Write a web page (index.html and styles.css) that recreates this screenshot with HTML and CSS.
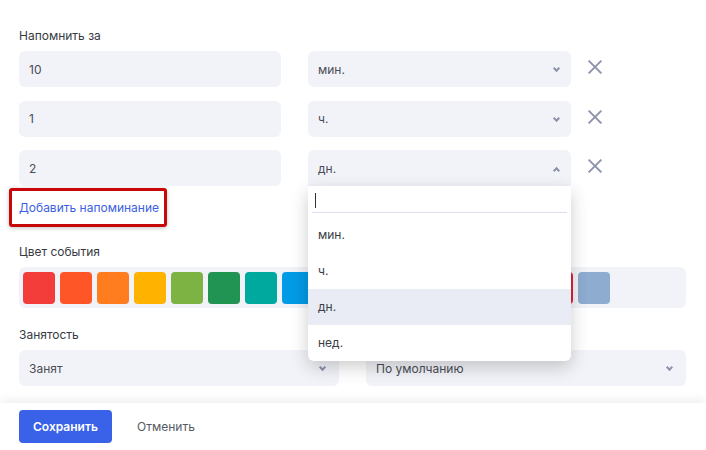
FILE: index.html
```html
<!DOCTYPE html>
<html lang="ru">
<head>
    <meta charset="UTF-8">
    <meta name="viewport" content="width=device-width, initial-scale=1.0">
    <title>Событие</title>
    <link rel="stylesheet" href="styles.css">
</head>
<body>
    <div class="page">
        <div class="content">
            <div class="field">
                <div class="label">Напомнить за</div>
                <div class="reminders">
                    <div class="reminder-row">
                        <div class="input">10</div>
                        <div class="select">мин.<span class="chevron"></span></div>
                        <span class="close"></span>
                    </div>
                    <div class="reminder-row">
                        <div class="input">1</div>
                        <div class="select">ч.<span class="chevron"></span></div>
                        <span class="close"></span>
                    </div>
                    <div class="reminder-row">
                        <div class="input">2</div>
                        <div class="select open">дн.<span class="chevron up"></span>
                            <div class="dropdown">
                                <div class="dd-search"><div class="dd-input"><span class="caret"></span></div></div>
                                <div class="dd-option">мин.</div>
                                <div class="dd-option">ч.</div>
                                <div class="dd-option active">дн.</div>
                                <div class="dd-option">нед.</div>
                            </div>
                        </div>
                        <span class="close"></span>
                    </div>
                </div>
                <a class="add-link" href="#">Добавить напоминание</a>
            </div>

            <div class="field">
                <div class="label">Цвет события</div>
                <div class="swatches">
                    <span class="swatch" style="background:#f33d3a"></span>
                    <span class="swatch" style="background:#ff5627"></span>
                    <span class="swatch" style="background:#ff7d1f"></span>
                    <span class="swatch" style="background:#ffb300"></span>
                    <span class="swatch" style="background:#7cb342"></span>
                    <span class="swatch" style="background:#219352"></span>
                    <span class="swatch" style="background:#00a99d"></span>
                    <span class="swatch" style="background:#039be5"></span>
                    <span class="swatch" style="background:#3f6fe0"></span>
                    <span class="swatch" style="background:#3f51b5"></span>
                    <span class="swatch" style="background:#7e57c2"></span>
                    <span class="swatch" style="background:#9c27b0"></span>
                    <span class="swatch" style="background:#d81b60"></span>
                    <span class="swatch" style="background:#ec407a"></span>
                    <span class="swatch" style="background:#e0203c"></span>
                    <span class="swatch" style="background:#8eacd0"></span>
                </div>
            </div>

            <div class="field">
                <div class="label">Занятость</div>
                <div class="two-cols">
                    <div class="select">Занят<span class="chevron"></span></div>
                    <div class="select">По умолчанию<span class="chevron"></span></div>
                </div>
            </div>
        </div>

        <div class="footer">
            <button class="btn-save">Сохранить</button>
            <button class="btn-cancel">Отменить</button>
        </div>
    </div>
</body>
</html>
```

FILE: styles.css
```css
* {
    box-sizing: border-box;
}
body {
    margin: 0;
    background: #fff;
    font-family: Inter, "Noto Sans", sans-serif;
    font-size: 12px;
    color: #3a3d45;
}
.page {
    height: 450px;
    display: flex;
    flex-direction: column;
    overflow: hidden;
}
.content {
    height: 403px;
    padding: 28px 20px 0 19px;
    overflow: hidden;
}
.field {
    margin-bottom: 9px;
}
.label {
    line-height: 16px;
    margin-bottom: 7px;
    color: #373a42;
}
.reminders {
    display: flex;
    flex-direction: column;
    gap: 13.5px;
}
.reminder-row {
    display: flex;
    align-items: center;
}
.input, .select {
    height: 36px;
    background: #f2f3f8;
    border-radius: 6px;
    padding: 0 10px;
    display: flex;
    align-items: center;
    color: #4a4d56;
    position: relative;
}
.reminder-row .input {
    width: 262px;
}
.reminder-row .select {
    width: 263px;
    margin-left: 27px;
}
.chevron {
    position: absolute;
    right: 12px;
    top: 15px;
    width: 5px;
    height: 5px;
    border-right: 2px solid #8c92ab;
    border-bottom: 2px solid #8c92ab;
    transform: rotate(45deg);
}
.chevron.up {
    top: 18px;
    transform: rotate(225deg);
}
.close {
    position: relative;
    width: 14px;
    height: 14px;
    margin-left: 17px;
    margin-top: -4px;
}
.close::before, .close::after {
    content: "";
    position: absolute;
    left: -2px;
    top: 6px;
    width: 18px;
    height: 2px;
    background: #8c93ad;
    transform: rotate(45deg);
}
.close::after {
    transform: rotate(-45deg);
}
.select.open {
    border-radius: 6px 6px 0 0;
}
.dropdown {
    position: absolute;
    left: 0;
    top: 36px;
    width: 100%;
    background: #fff;
    border-radius: 0 0 6px 6px;
    box-shadow: 0 6px 18px rgba(0, 0, 0, 0.2);
    z-index: 5;
}
.dd-search {
    padding: 4px;
}
.dd-input {
    height: 23px;
    border-bottom: 1px solid #dedcef;
    padding: 3px 3px 0;
}
.caret {
    display: block;
    width: 1px;
    height: 15px;
    background: #333;
}
.dd-option {
    height: 36px;
    line-height: 36px;
    padding: 0 10px;
    color: #3a3d45;
}
.dd-option.active {
    background: #e9ecf4;
}
.add-link {
    display: inline-block;
    margin: 2px 0 0 -10px;
    padding: 9px 5px 8px 7px;
    border: 3px solid #c8070b;
    border-radius: 3px;
    box-shadow: 0 1px 4px rgba(0, 0, 0, 0.25);
    color: #3d5fe3;
    text-decoration: none;
    line-height: 16px;
}
.field:first-child {
    margin-bottom: 17px;
}
.swatches {
    display: flex;
    gap: 5px;
    background: #f2f3f8;
    border-radius: 6px;
    padding: 5px 4px 4px;
    margin-bottom: 19px;
}
.swatch {
    width: 32px;
    height: 32px;
    border-radius: 4px;
    flex-shrink: 0;
}
.two-cols {
    display: grid;
    grid-template-columns: 320px 320px;
    column-gap: 27px;
}
.two-cols .chevron {
    right: 14px;
}
.footer {
    height: 47px;
    padding: 7px 19px 0;
    display: flex;
    align-items: flex-start;
    background: #fff;
    box-shadow: 0 -3px 10px rgba(0, 0, 0, 0.07);
    position: relative;
    z-index: 6;
}
.btn-save {
    width: 93px;
    height: 33px;
    border: none;
    border-radius: 4px;
    background: #3962e9;
    color: #fff;
    font-family: inherit;
    font-size: 12px;
    font-weight: 600;
}
.btn-cancel {
    height: 33px;
    margin-left: 15px;
    padding: 0 10px;
    border: none;
    background: none;
    color: #555a64;
    font-family: inherit;
    font-size: 12px;
}
```
